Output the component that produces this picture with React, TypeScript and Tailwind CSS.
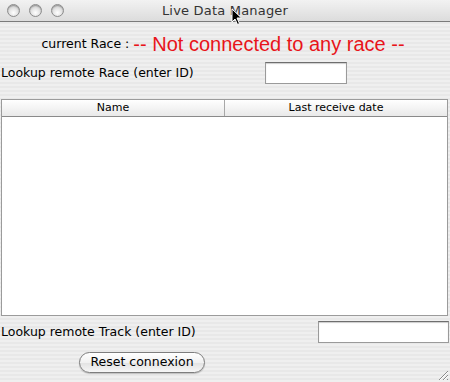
import React from 'react';

const TrafficLight = () => (
  <div className="w-[13px] h-[13px] rounded-full border border-[#8c8c8c] bg-[radial-gradient(circle_at_50%_70%,#ffffff_0%,#e4e4e4_45%,#b9b9b9_100%)] shadow-[inset_0_1px_1px_rgba(0,0,0,0.25)]" />
);

const MacInput = ({ className }: { className: string }) => (
  <div className={`bg-white border border-[#9a9a9a] border-t-[#6e6e6e] shadow-[inset_0_1px_1px_rgba(0,0,0,0.2)] ${className}`} />
);

const App = () => {
  return (
    <div
      className="relative w-[450px] h-[382px] overflow-hidden flex flex-col text-[12.5px] text-black bg-[repeating-linear-gradient(180deg,#efefef_0px,#efefef_2px,#e8e8e8_2px,#e8e8e8_4px)]"
      style={{ fontFamily: '"DejaVu Sans", "Liberation Sans", sans-serif' }}
    >
      {/* title bar */}
      <div className="relative h-[22px] shrink-0 flex items-center border-b border-[#7a7a7a] bg-[linear-gradient(180deg,#f2f2f2,#dcdcdc)]">
        <div className="flex items-center gap-[9px] pl-[7px]">
          <TrafficLight />
          <TrafficLight />
          <TrafficLight />
        </div>
        <div className="absolute inset-0 flex items-center justify-center text-[13px] text-[#333] tracking-[0.2px]">
          Live Data Manager
        </div>
      </div>

      {/* current race */}
      <div className="h-[20px] mt-[12px] flex items-center justify-center gap-[4px] pr-[4px]">
        <span className="text-[12.5px]">current Race :</span>
        <span
          className="text-[20px] text-[#e8141a] leading-none"
          style={{ fontFamily: '"Liberation Sans", Arial, sans-serif' }}
        >
          -- Not connected to any race --
        </span>
      </div>

      {/* lookup race */}
      <div className="h-[22px] mt-[8px] flex items-center">
        <span className="pl-[1px] w-[265px]">Lookup remote Race (enter ID)</span>
        <MacInput className="w-[82px] h-[22px]" />
      </div>

      {/* table */}
      <div className="mt-[15px] ml-[1px] w-[447px] h-[217px] flex flex-col bg-white border border-[#9b9b9b]">
        <div className="h-[17px] shrink-0 flex border-b border-[#8a8a8a] bg-[linear-gradient(180deg,#ffffff,#e9e9e9)] text-[11px]">
          <div className="w-[223px] flex items-center justify-center border-r border-[#a8a8a8]">Name</div>
          <div className="flex-1 flex items-center justify-center">Last receive date</div>
        </div>
        <div className="flex-1" />
      </div>

      {/* lookup track */}
      <div className="h-[22px] mt-[5px] flex items-center">
        <span className="pl-[1px] w-[318px]">Lookup remote Track (enter ID)</span>
        <MacInput className="w-[131px] h-[22px]" />
      </div>

      {/* reset button */}
      <div className="mt-[9px] pl-[79px]">
        <button className="w-[126px] h-[21px] rounded-full border border-[#7d7d7d] bg-[linear-gradient(180deg,#ffffff_0%,#f1f1f1_50%,#e2e2e2_51%,#f6f6f6_100%)] shadow-[0_1px_1px_rgba(0,0,0,0.2)] text-[12.5px] leading-none flex items-center justify-center">
          Reset connexion
        </button>
      </div>

      {/* resize grip */}
      <svg className="absolute right-[1px] bottom-[1px]" width="13" height="13" viewBox="0 0 13 13">
        <path d="M12 3 L3 12 M12 7 L7 12 M12 11 L11 12" stroke="#8a8a8a" strokeWidth="1" />
        <path d="M12 4 L4 12 M12 8 L8 12" stroke="#ffffff" strokeWidth="1" />
      </svg>

      {/* mouse pointer */}
      <svg className="absolute left-[231px] top-[8px]" width="12" height="18" viewBox="0 0 12 18">
        <path d="M1 1 L1 14 L4 11 L6.5 16.5 L8.5 15.5 L6 10 L10.5 10 Z" fill="#000" stroke="#fff" strokeWidth="1" />
      </svg>
    </div>
  );
};

export default App;
